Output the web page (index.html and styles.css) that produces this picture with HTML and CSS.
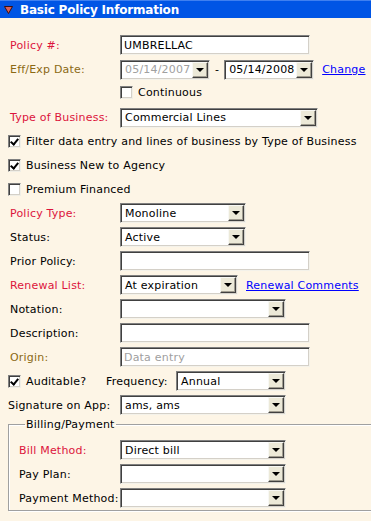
FILE: index.html
```html
<!DOCTYPE html>
<html lang="en">
<head>
<meta charset="UTF-8" />
<title>Basic Policy Information</title>
<link rel="stylesheet" href="styles.css">
</head>
<body>
  <div class="panel">
    <div class="panel-head">
      <svg class="toggle" width="9" height="8" viewBox="0 0 9 8"><path d="M0.5 0.5 H8.5 L4.5 7.5 Z" fill="#d9605a" stroke="#3a1010" stroke-width="1"/></svg>
      <span>Basic Policy Information</span>
    </div>

    <div class="panel-body">
      <div class="row">
        <label class="lbl req">Policy #:</label>
        <span class="box w190">UMBRELLAC</span>
      </div>

      <div class="row dates">
        <label class="lbl dis">Eff/Exp Date:</label>
        <span class="combo w90 off"><span class="val">05/14/2007</span><span class="btn"></span></span>
        <span class="dash">-</span>
        <span class="combo w90"><span class="val">05/14/2008</span><span class="btn"></span></span>
        <a href="#" class="link change">Change</a>
      </div>

      <div class="row short">
        <span class="lbl"></span>
        <span class="check"></span><span class="ctext">Continuous</span>
      </div>

      <div class="row tob">
        <label class="lbl req">Type of Business:</label>
        <span class="combo w198"><span class="val">Commercial Lines</span><span class="btn"></span></span>
      </div>

      <div class="row">
        <span class="check on"></span><span class="ctext">Filter data entry and lines of business by Type of Business</span>
      </div>
      <div class="row">
        <span class="check on"></span><span class="ctext">Business New to Agency</span>
      </div>
      <div class="row">
        <span class="check"></span><span class="ctext">Premium Financed</span>
      </div>

      <div class="row">
        <label class="lbl req">Policy Type:</label>
        <span class="combo w126"><span class="val">Monoline</span><span class="btn"></span></span>
      </div>
      <div class="row">
        <label class="lbl">Status:</label>
        <span class="combo w126"><span class="val">Active</span><span class="btn"></span></span>
      </div>
      <div class="row">
        <label class="lbl">Prior Policy:</label>
        <span class="box w190"></span>
      </div>
      <div class="row">
        <label class="lbl req">Renewal List:</label>
        <span class="combo w118"><span class="val">At expiration</span><span class="btn"></span></span>
        <a href="#" class="link renew">Renewal Comments</a>
      </div>
      <div class="row">
        <label class="lbl">Notation:</label>
        <span class="combo w166"><span class="val"></span><span class="btn"></span></span>
      </div>
      <div class="row">
        <label class="lbl">Description:</label>
        <span class="box w190"></span>
      </div>
      <div class="row">
        <label class="lbl dis">Origin:</label>
        <span class="box w190 off">Data entry</span>
      </div>

      <div class="row">
        <span class="check on"></span><span class="ctext audit">Auditable?</span>
        <span class="freq">Frequency:</span>
        <span class="combo w110"><span class="val">Annual</span><span class="btn"></span></span>
      </div>
      <div class="row">
        <label class="lbl tight">Signature on App:</label>
        <span class="combo w166"><span class="val">ams, ams</span><span class="btn"></span></span>
      </div>

      <fieldset class="billing">
        <legend>Billing/Payment</legend>
        <div class="row">
          <label class="lbl req">Bill Method:</label>
          <span class="combo w166"><span class="val">Direct bill</span><span class="btn"></span></span>
        </div>
        <div class="row">
          <label class="lbl">Pay Plan:</label>
          <span class="combo w166"><span class="val"></span><span class="btn"></span></span>
        </div>
        <div class="row">
          <label class="lbl">Payment Method:</label>
          <span class="combo w166"><span class="val"></span><span class="btn"></span></span>
        </div>
      </fieldset>
    </div>
  </div>
</body>
</html>
```

FILE: styles.css
```css
/* Base */
* {
  box-sizing: border-box;
}
body {
  margin: 0;
  background: #fdf5e6;
  font-family: 'DejaVu Sans', Verdana, sans-serif;
  font-size: 11px;
  letter-spacing: 0.2px;
  color: #000;
}

.panel {
  overflow: hidden;
  height: 521px;
}

/* Header bar */
.panel-head {
  height: 18px;
  background: #0055e5;
  border-top: 1px solid #3f80f0;
  color: #fff;
  font-weight: bold;
  font-size: 12px;
  letter-spacing: -0.2px;
  display: flex;
  align-items: center;
  padding-left: 4px;
}
.toggle {
  margin-right: 7px;
}

.panel-body {
  padding-top: 15px;
}

/* Rows */
.row {
  display: flex;
  align-items: center;
  height: 24px;
  padding-left: 8px;
}
.row.dates {
  height: 25px;
}
.row.short {
  height: 24px;
  padding-bottom: 4px;
}
.row.tob {
  height: 23px;
}
.lbl {
  width: 112px;
  padding-left: 2px;
  flex: none;
  white-space: nowrap;
}
.lbl.tight {
  padding-left: 0;
}
.lbl.req {
  color: #dc143c;
}
.lbl.dis {
  color: #8b6914;
}

/* Text boxes and combos */
.box,
.combo {
  height: 20px;
  background: #fff;
  border: 1px solid;
  border-color: #808080 #f4f2ea #f4f2ea #808080;
  box-shadow: inset 1px 1px 0 #404040, inset -1px -1px 0 #d4d0c8;
  display: flex;
  align-items: center;
  flex: none;
}
.box {
  padding-left: 3px;
}
.off {
  color: #a0a0a0;
}
.combo .val {
  flex: 1;
  padding-left: 4px;
  white-space: nowrap;
  overflow: hidden;
}
.combo .btn {
  width: 16px;
  height: 16px;
  flex: none;
  margin-right: 1px;
  background: #ece9d8;
  border: 1px solid;
  border-color: #f8f8f4 #404040 #404040 #f8f8f4;
  box-shadow: inset -1px -1px 0 #a09c90;
  display: flex;
  align-items: center;
  justify-content: center;
}
.combo .btn::after {
  content: "";
  border-left: 4px solid transparent;
  border-right: 4px solid transparent;
  border-top: 4px solid #000;
}

.w190 { width: 190px; }
.w90 { width: 90px; }
.w198 { width: 198px; }
.w126 { width: 126px; }
.w118 { width: 118px; }
.w166 { width: 166px; }
.w110 { width: 110px; }

.dash {
  margin: 0 5px;
}
.link {
  color: #0000ff;
  text-decoration: underline;
}
.change {
  margin-left: 8px;
}
.renew {
  margin-left: 8px;
}

/* Checkboxes */
.check {
  width: 13px;
  height: 13px;
  flex: none;
  background: #fff;
  border: 1px solid;
  border-color: #808080 #f0eee6 #f0eee6 #808080;
  box-shadow: inset 1px 1px 0 #404040, inset -1px -1px 0 #d4d0c8;
  position: relative;
}
.check.on::after {
  content: "";
  position: absolute;
  left: 3px;
  top: 1px;
  width: 3px;
  height: 6px;
  border: solid #000;
  border-width: 0 2px 2px 0;
  transform: rotate(40deg);
}
.ctext {
  margin-left: 5px;
  white-space: nowrap;
}
.ctext.audit {
  width: 80px;
  flex: none;
}
.freq {
  width: 70px;
  flex: none;
}

/* Billing group */
.billing {
  margin: 1px -20px 0 8px;
  padding: 7px 0 0 10px;
  border: 1px solid #a0a0a0;
  box-shadow: 1px 1px 0 #fff, inset 1px 1px 0 #fff;
}
.billing legend {
  padding: 0 1px;
  margin-left: 6px;
}
.billing .row {
  padding-left: 0;
}
.billing .lbl {
  width: 101px;
  padding-left: 0;
}
```
